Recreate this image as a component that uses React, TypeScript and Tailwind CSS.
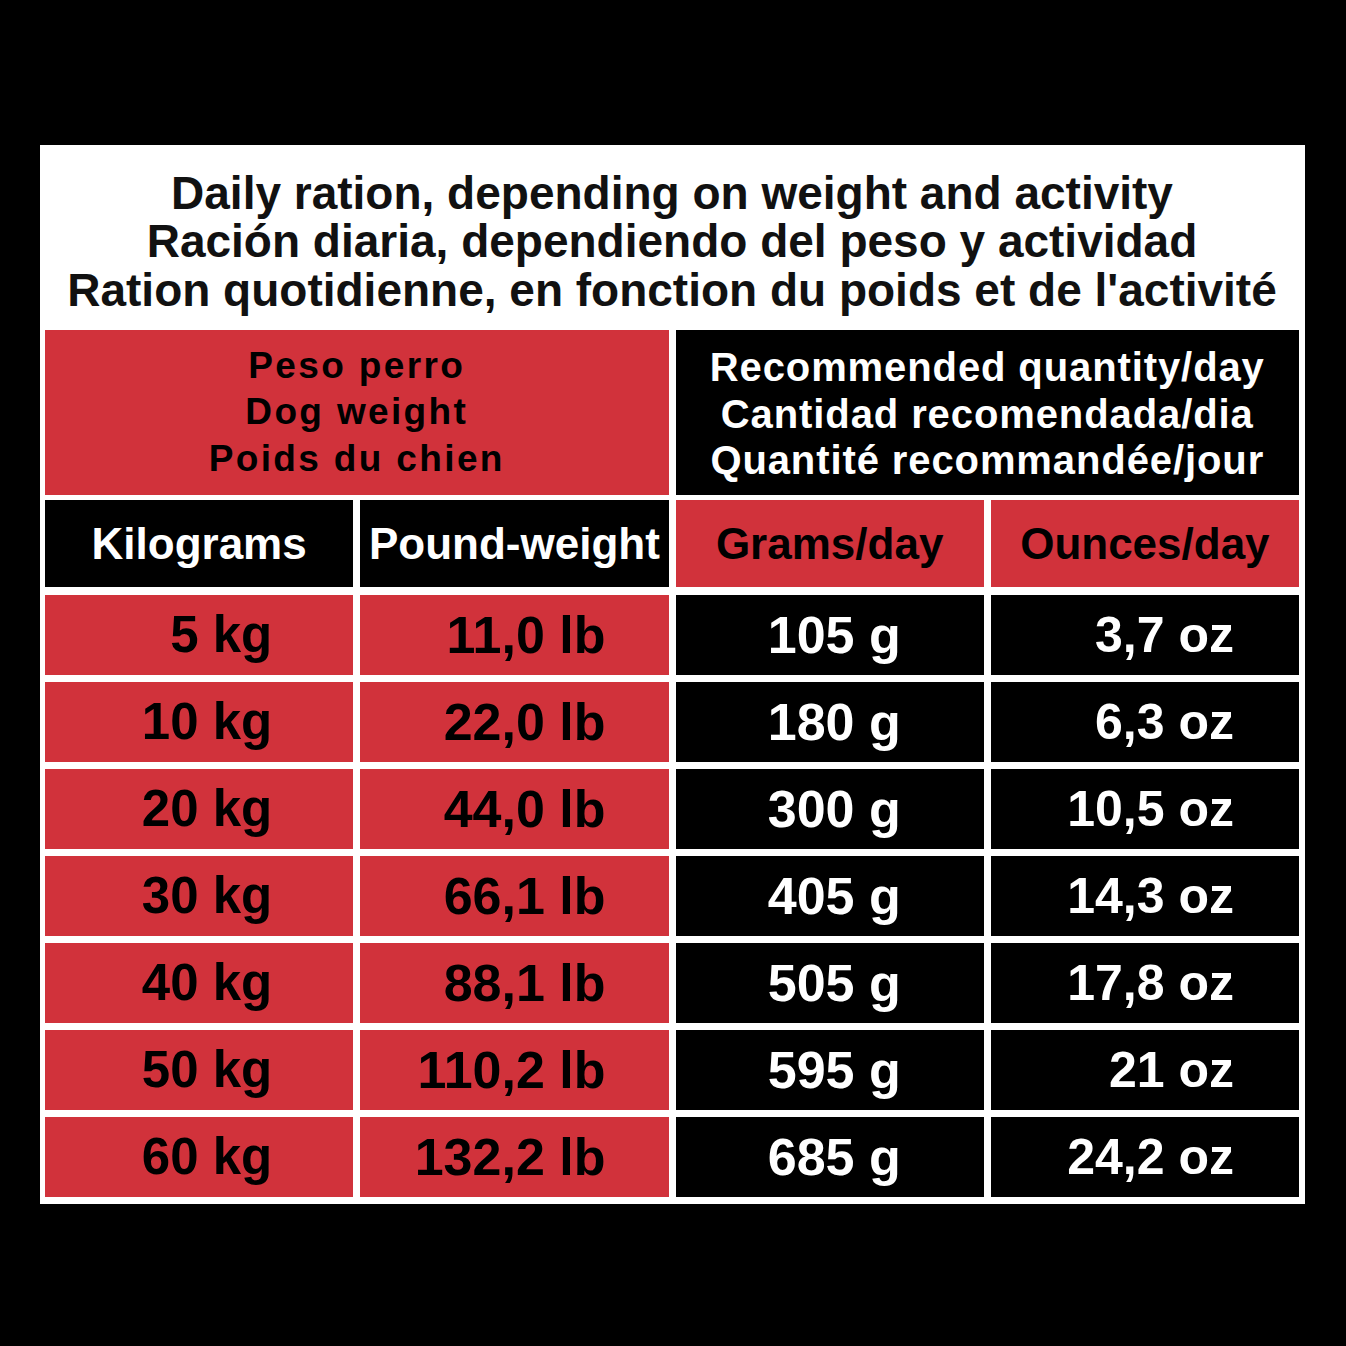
const rows = [
  { kg: '5 kg', lb: '11,0 lb', g: '105 g', oz: '3,7 oz' },
  { kg: '10 kg', lb: '22,0 lb', g: '180 g', oz: '6,3 oz' },
  { kg: '20 kg', lb: '44,0 lb', g: '300 g', oz: '10,5 oz' },
  { kg: '30 kg', lb: '66,1 lb', g: '405 g', oz: '14,3 oz' },
  { kg: '40 kg', lb: '88,1 lb', g: '505 g', oz: '17,8 oz' },
  { kg: '50 kg', lb: '110,2 lb', g: '595 g', oz: '21 oz' },
  { kg: '60 kg', lb: '132,2 lb', g: '685 g', oz: '24,2 oz' },
];

export default function App() {
  return (
    <div className="min-h-[1346px] w-[1346px] bg-black pt-[145px] font-['Liberation_Sans',Arial,sans-serif] font-bold">
      <div className="ml-[40px] w-[1265px] bg-white pl-[5px] pr-[6px] pb-[7px]">
        {/* Title */}
        <div className="flex h-[185px] flex-col items-center justify-center pt-[8px] text-center text-[46px] leading-[48.5px] text-[#111]">
          <div>Daily ration, depending on weight and activity</div>
          <div>Ración diaria, dependiendo del peso y actividad</div>
          <div>Ration quotidienne, en fonction du poids et de l'activité</div>
        </div>

        <div className="grid grid-cols-4 gap-x-[7px]">
          {/* Header row 1 */}
          <div className="col-span-2 flex h-[165px] flex-col items-center justify-center bg-[#d1323b] text-[37px] leading-[46.5px] tracking-[2.35px] text-black">
            <div>Peso perro</div>
            <div>Dog weight</div>
            <div>Poids du chien</div>
          </div>
          <div className="col-span-2 flex h-[165px] flex-col items-center justify-center bg-black pt-[3px] text-[40px] leading-[46.5px] tracking-[0.9px] text-white">
            <div>Recommended quantity/day</div>
            <div>Cantidad recomendada/dia</div>
            <div>Quantité recommandée/jour</div>
          </div>

          {/* Header row 2 */}
          <div className="mt-[5px] flex h-[87px] items-center justify-center bg-black text-[44px] text-white">Kilograms</div>
          <div className="mt-[5px] flex h-[87px] items-center justify-center bg-black text-[44px] text-white">Pound-weight</div>
          <div className="mt-[5px] flex h-[87px] items-center justify-center bg-[#d1323b] text-[44px] text-black">Grams/day</div>
          <div className="mt-[5px] flex h-[87px] items-center justify-center bg-[#d1323b] text-[44px] text-black">Ounces/day</div>
        </div>

        {/* Data rows */}
        <div className="mt-[8px] grid grid-cols-4 gap-x-[7px] gap-y-[7px] text-[52px]">
          {rows.map((r) => (
            <div key={r.kg} className="contents">
              <div className="flex h-[80px] items-center justify-end bg-[#d1323b] pr-[81px] text-[51px] text-black">{r.kg}</div>
              <div className="flex h-[80px] items-center justify-end bg-[#d1323b] pr-[63px] text-black">{r.lb}</div>
              <div className="flex h-[80px] items-center justify-end bg-black pr-[83px] text-white">{r.g}</div>
              <div className="flex h-[80px] items-center justify-end bg-black pr-[65px] text-[50px] text-white">{r.oz}</div>
            </div>
          ))}
        </div>
      </div>
    </div>
  );
}
